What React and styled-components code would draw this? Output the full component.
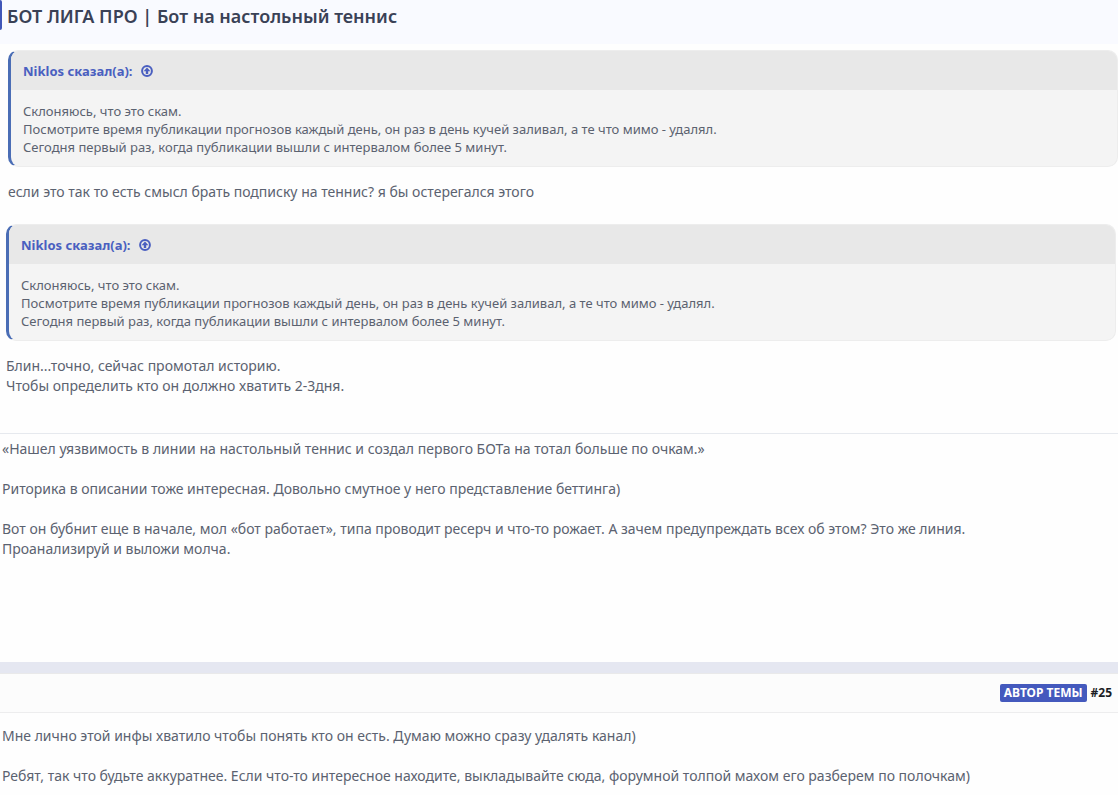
import React from 'react'
import styled, { createGlobalStyle } from 'styled-components'

const GlobalStyle = createGlobalStyle`
  * {
    box-sizing: border-box;
  }
  body {
    margin: 0;
    background: #fefefe;
    color: #5b6270;
    font-family: 'Noto Sans', 'Open Sans', sans-serif;
    font-size: 14px;
    line-height: 20px;
  }
`

const Header = styled.header`
  display: flex;
  align-items: flex-start;
  height: 44px;
  background: #f9faff;
`

const Marker = styled.span`
  width: 2px;
  height: 30px;
  background: #4056b8;
  border-radius: 0 2px 2px 0;
`

const Title = styled.h1`
  margin: 0;
  padding: 4px 5px;
  color: #3a4156;
  font-size: 18px;
  font-weight: 600;
  line-height: 24px;
`

const Post = styled.article`
  padding: ${({ $inset, $top }) => ($inset ? `6px 0 0 ${$inset}px` : `${$top}px 2px 0`)};
  margin-right: ${({ $gap }) => $gap || 0}px;
`

const Quote = styled.blockquote`
  margin: 0;
  background: #f4f4f4;
  border: 1px solid #ededed;
  border-left: 3px solid #4a6db5;
  border-radius: 10px;
  overflow: hidden;
`

const QuoteHead = styled.div`
  padding: 11px 12px 10px;
  background: #e8e8e8;
  font-size: 13px;
  font-weight: 700;
  line-height: 18px;
`

const JumpLink = styled.a`
  display: inline-flex;
  align-items: center;
  gap: 8px;
  color: #4a5fc0;
  text-decoration: none;
`

const QuoteBody = styled.div`
  padding: 12px 12px 10px;
  font-size: 13px;
  line-height: 18px;
`

const Message = styled.p`
  margin: 0 0 ${({ $after }) => $after || 0}px;
`

const Reply = styled.div`
  padding: 15px 0 ${({ $bottom }) => $bottom}px;
`

const Divider = styled.hr`
  margin: 0;
  border: 0;
  border-top: 1px solid #e6e9ee;
`

const Separator = styled.div`
  height: 11px;
  background: #e5e7f1;
`

const PostBar = styled.div`
  display: flex;
  align-items: center;
  justify-content: flex-end;
  gap: 4px;
  height: 40px;
  padding-right: 6px;
  background: #fcfcfc;
  border-top: 1px solid #e9e9ea;
  border-bottom: 1px solid #ededee;
  font-size: 12px;
  font-weight: 700;
`

const Badge = styled.span`
  padding: 0 4px;
  background: #4459bd;
  border-radius: 2px;
  color: #fff;
  font-size: 12px;
  line-height: 18px;
`

const PostNumber = styled.a`
  color: #1b1d24;
  text-decoration: none;
`

const UpIcon = () => (
  <svg width="12" height="12" viewBox="0 0 12 12" fill="none" stroke="currentColor" aria-hidden="true">
    <circle cx="6" cy="6" r="4.9" strokeWidth="2" />
    <path d="M6 2.4 9.4 6.2H7.2V9H4.8V6.2H2.6Z" fill="currentColor" stroke="none" />
  </svg>
)

const NiklosQuote = () => (
  <Quote>
    <QuoteHead>
      <JumpLink href="#niklos">
        Niklos сказал(а): <UpIcon />
      </JumpLink>
    </QuoteHead>
    <QuoteBody>
      Склоняюсь, что это скам.<br />
      Посмотрите время публикации прогнозов каждый день, он раз в день кучей заливал, а те что мимо - удалял.<br />
      Сегодня первый раз, когда публикации вышли с интервалом более 5 минут.
    </QuoteBody>
  </Quote>
)

const App = () => (
  <>
    <GlobalStyle />
    <Header>
      <Marker />
      <Title>БОТ ЛИГА ПРО | Бот на настольный теннис</Title>
    </Header>
    <main>
      <Post $inset={8}>
        <NiklosQuote />
        <Reply $bottom={16}>
          <Message>если это так то есть смысл брать подписку на теннис? я бы остерегался этого</Message>
        </Reply>
      </Post>
      <Post $inset={6} $gap={2}>
        <NiklosQuote />
        <Reply $bottom={37}>
          <Message>
            Блин...точно, сейчас промотал историю.<br />
            Чтобы определить кто он должно хватить 2-3дня.
          </Message>
        </Reply>
      </Post>
      <Divider />
      <Post $top={5}>
        <Message $after={20}>
          «Нашел уязвимость в линии на настольный теннис и создал первого БОТа на тотал больше по очкам.»
        </Message>
        <Message $after={20}>
          Риторика в описании тоже интересная. Довольно смутное у него представление беттинга)
        </Message>
        <Message $after={103}>
          Вот он бубнит еще в начале, мол «бот работает», типа проводит ресерч и что-то рожает. А зачем предупреждать всех об этом? Это же линия.<br />
          Проанализируй и выложи молча.
        </Message>
      </Post>
      <Separator />
      <PostBar>
        <Badge>АВТОР ТЕМЫ</Badge>
        <PostNumber href="#25">#25</PostNumber>
      </PostBar>
      <Post $top={13}>
        <Message $after={20}>
          Мне лично этой инфы хватило чтобы понять кто он есть. Думаю можно сразу удалять канал)
        </Message>
        <Message>
          Ребят, так что будьте аккуратнее. Если что-то интересное находите, выкладывайте сюда, форумной толпой махом его разберем по полочкам)
        </Message>
      </Post>
    </main>
  </>
)

export default App
